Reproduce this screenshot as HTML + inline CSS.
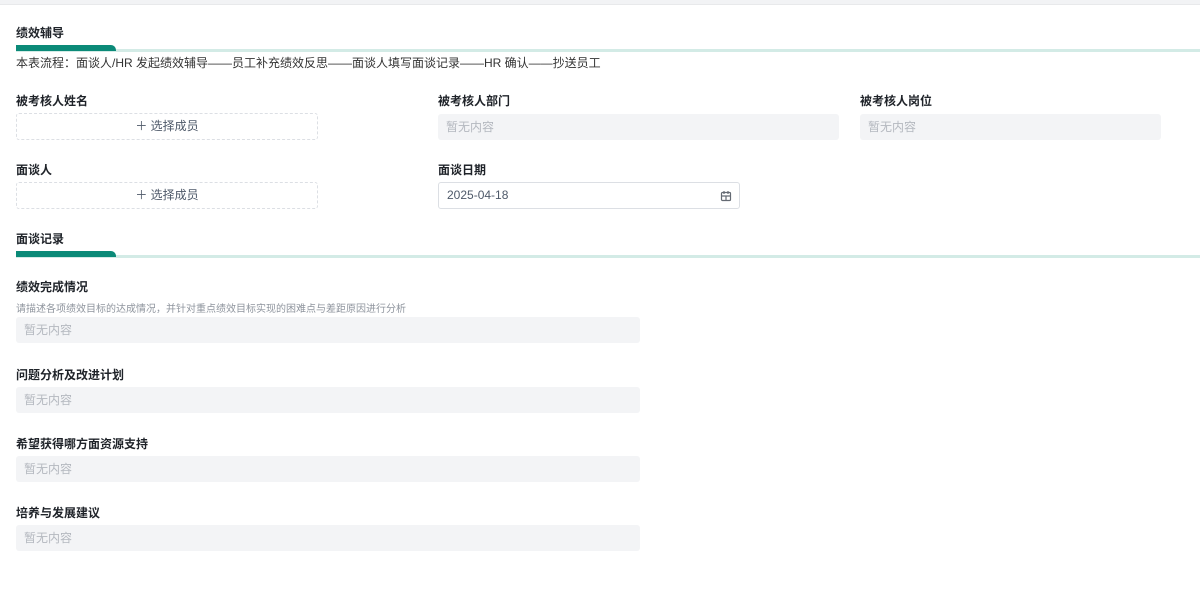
<!DOCTYPE html>
<html><head><meta charset="utf-8"><style>
*{margin:0;padding:0;box-sizing:border-box}
body{width:1200px;height:606px;background:#fff;font-family:"Liberation Sans","Noto Sans CJK SC",sans-serif;color:#1f2329;position:relative;overflow:hidden}
.a{position:absolute}
.top{left:0;top:0;width:1200px;height:5px;background:#f2f3f5;border-bottom:1px solid #e8e9eb}
.t{font-size:12px;font-weight:bold;color:#1f2329;line-height:16px}
.line{left:16px;right:0;height:3px;background:#d3ebe6}
.bar{left:16px;width:100px;height:6px;background:#0b8a78;border-radius:0 5px 0 0}
.box{height:26px;background:#f3f4f6;border-radius:3px;font-size:12px;color:#b4b8bf;line-height:26px;padding-left:8px}
.sel{height:27px;border:1px dashed #dcdfe4;border-radius:3px;font-size:12px;color:#4e5969;line-height:25px;text-align:center}
.desc{font-size:10px;color:#8f959e}
</style></head><body>
<div class="a top"></div>
<div class="a t" style="left:16px;top:25px">绩效辅导</div>
<div class="a line" style="top:49px"></div>
<div class="a bar" style="top:45px"></div>
<div class="a" style="left:16px;top:55px;font-size:12px;color:#333;line-height:16px">本表流程：面谈人/HR 发起绩效辅导——员工补充绩效反思——面谈人填写面谈记录——HR 确认——抄送员工</div>

<div class="a t" style="left:16px;top:93px">被考核人姓名</div>
<div class="a sel" style="left:16px;top:113px;width:302px">＋ 选择成员</div>
<div class="a t" style="left:438px;top:93px">被考核人部门</div>
<div class="a box" style="left:438px;top:114px;width:401px">暂无内容</div>
<div class="a t" style="left:860px;top:93px">被考核人岗位</div>
<div class="a box" style="left:860px;top:114px;width:301px">暂无内容</div>

<div class="a t" style="left:16px;top:162px">面谈人</div>
<div class="a sel" style="left:16px;top:182px;width:302px">＋ 选择成员</div>
<div class="a t" style="left:438px;top:162px">面谈日期</div>
<div class="a" style="left:438px;top:182px;width:302px;height:27px;border:1px solid #dcdfe4;border-radius:3px;font-size:12px;color:#4e5969;line-height:25px;padding-left:8px">2025-04-18
<svg style="position:absolute;right:7px;top:7px" width="12" height="12" viewBox="0 0 12 12" fill="none" stroke="#646a73" stroke-width="1.2"><rect x="1.5" y="2.5" width="9" height="8" rx="1"/><path d="M1.5 6h9M4 1v3M8 1v3M6 6v4.5"/></svg></div>

<div class="a t" style="left:16px;top:231px">面谈记录</div>
<div class="a line" style="top:255px"></div>
<div class="a bar" style="top:251px"></div>

<div class="a t" style="left:16px;top:279px">绩效完成情况</div>
<div class="a desc" style="left:16px;top:300px">请描述各项绩效目标的达成情况，并针对重点绩效目标实现的困难点与差距原因进行分析</div>
<div class="a box" style="left:16px;top:317px;width:624px">暂无内容</div>
<div class="a t" style="left:16px;top:367px">问题分析及改进计划</div>
<div class="a box" style="left:16px;top:387px;width:624px">暂无内容</div>
<div class="a t" style="left:16px;top:436px">希望获得哪方面资源支持</div>
<div class="a box" style="left:16px;top:456px;width:624px">暂无内容</div>
<div class="a t" style="left:16px;top:505px">培养与发展建议</div>
<div class="a box" style="left:16px;top:525px;width:624px">暂无内容</div>
</body></html>
